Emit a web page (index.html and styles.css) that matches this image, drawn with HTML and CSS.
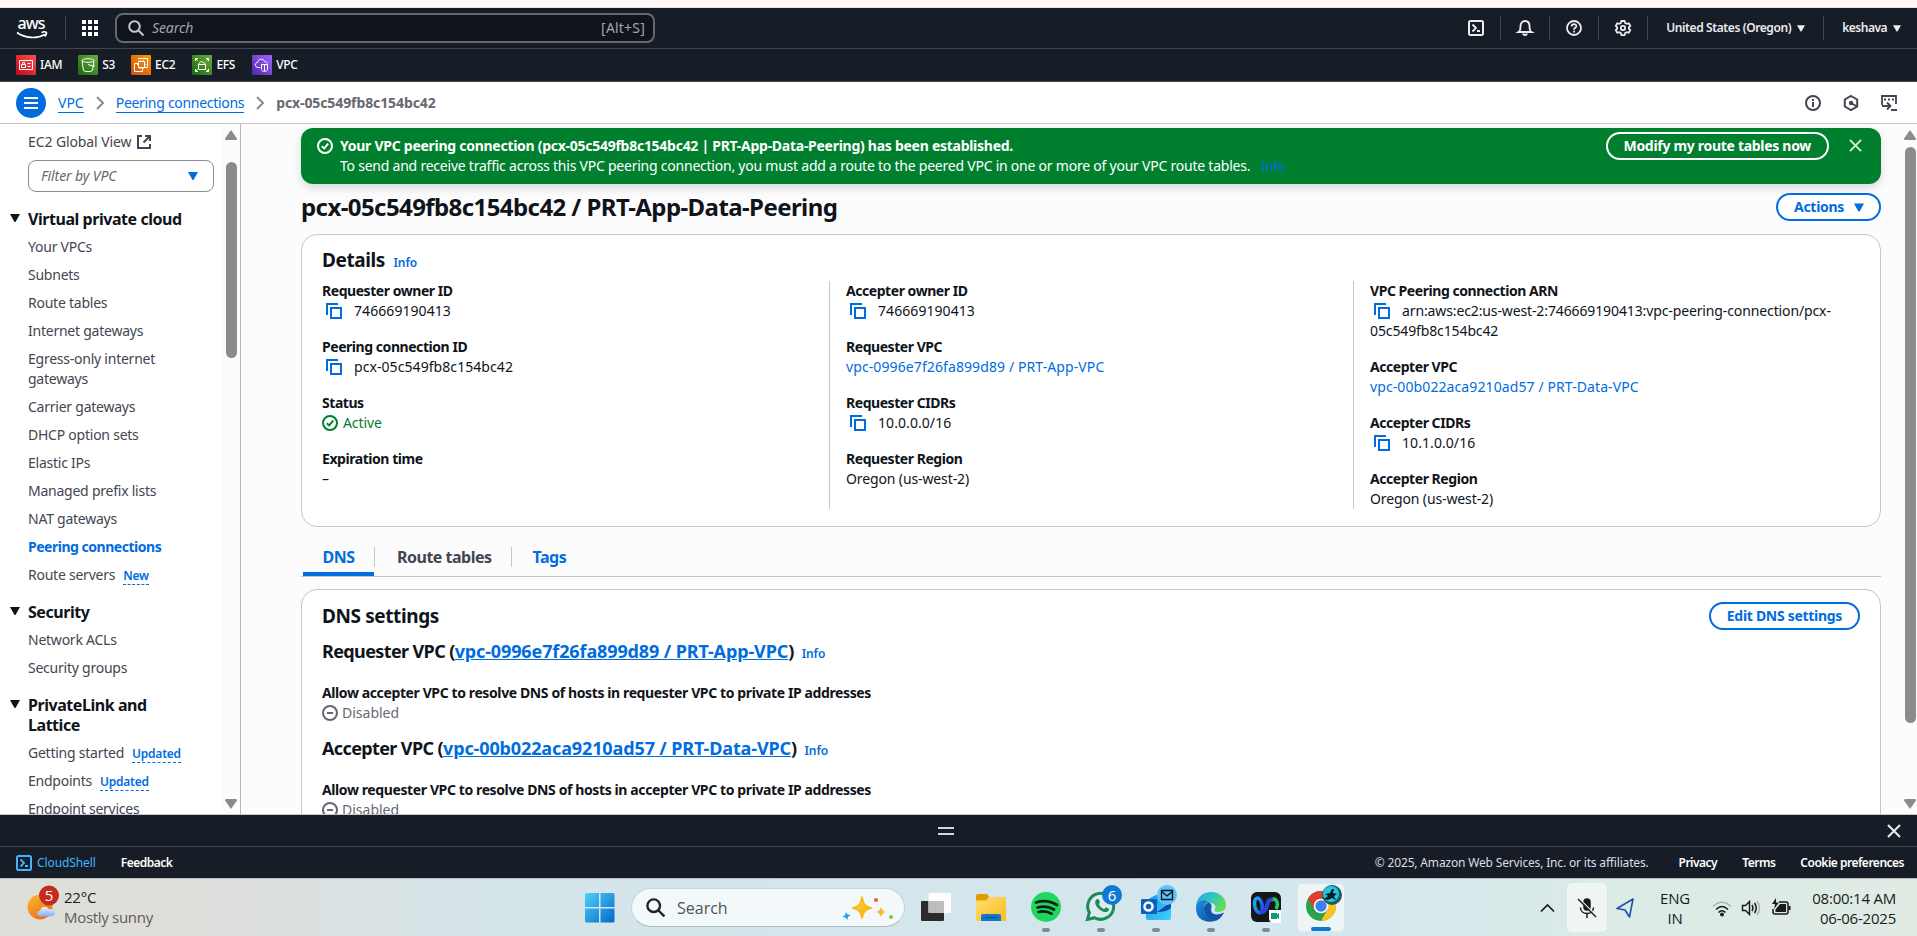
FILE: index.html
```html
<!DOCTYPE html>
<html lang="en">
<head>
<meta charset="utf-8">
<title>Peering connection details | VPC Console</title>
<link rel="stylesheet" href="styles.css">
</head>
<body>
<svg class="defs" width="0" height="0" aria-hidden="true">
  <defs>
    <linearGradient id="red" x1="0" y1="1" x2="1" y2="0"><stop offset="0" stop-color="#bd0816"/><stop offset="1" stop-color="#ff5252"/></linearGradient>
    <linearGradient id="green" x1="0" y1="1" x2="1" y2="0"><stop offset="0" stop-color="#1b660f"/><stop offset="1" stop-color="#6cae3e"/></linearGradient>
    <linearGradient id="orange" x1="0" y1="1" x2="1" y2="0"><stop offset="0" stop-color="#c8511b"/><stop offset="1" stop-color="#f90"/></linearGradient>
    <linearGradient id="purple" x1="0" y1="1" x2="1" y2="0"><stop offset="0" stop-color="#4d27a8"/><stop offset="1" stop-color="#a166ff"/></linearGradient>
    <linearGradient id="win" x1="0" y1="0" x2="1" y2="1"><stop offset="0" stop-color="#4fd0fb"/><stop offset="1" stop-color="#0468c6"/></linearGradient>
    <linearGradient id="gold" x1="0" y1="0" x2="1" y2="1"><stop offset="0" stop-color="#ffd95e"/><stop offset="1" stop-color="#f6a800"/></linearGradient>
    <linearGradient id="sun" x1="0" y1="0" x2=".6" y2="1"><stop offset="0" stop-color="#f9bd32"/><stop offset="1" stop-color="#ee6f14"/></linearGradient>
    <linearGradient id="cloud" x1="0" y1="0" x2="0" y2="1"><stop offset="0" stop-color="#e8f0fd"/><stop offset="1" stop-color="#86aef0"/></linearGradient>
    <linearGradient id="folder" x1="0" y1="0" x2="1" y2="1"><stop offset="0" stop-color="#ffdf72"/><stop offset="1" stop-color="#fbbb1c"/></linearGradient>
    <linearGradient id="edge-top" x1="0" y1="0" x2="1" y2=".4"><stop offset="0" stop-color="#2aa6dc"/><stop offset=".55" stop-color="#2fc3c9"/><stop offset="1" stop-color="#62dd57"/></linearGradient>
    <linearGradient id="edge-low" x1="0" y1="0" x2="1" y2="1"><stop offset="0" stop-color="#1b8fe0"/><stop offset="1" stop-color="#0c4b9b"/></linearGradient>
    <linearGradient id="webex" x1="0" y1="0" x2="1" y2="1"><stop offset="0" stop-color="#16b8f3"/><stop offset="1" stop-color="#2343f0"/></linearGradient>
    <linearGradient id="outlook" x1="0" y1="0" x2="1" y2="1"><stop offset="0" stop-color="#1a8fe3"/><stop offset="1" stop-color="#3fd5fb"/></linearGradient>
    <symbol id="copy" viewBox="0 0 16 16"><path d="M1 12V1h11" fill="none" stroke="currentColor" stroke-width="2"/><path d="M5 5h10v10H5z" fill="none" stroke="currentColor" stroke-width="2"/></symbol>
    <symbol id="ok" viewBox="0 0 16 16"><circle cx="8" cy="8" r="7" fill="none" stroke="currentColor" stroke-width="2"/><path d="M4.800 8.200l2.400 2.200 4-4.800" fill="none" stroke="currentColor" stroke-width="2"/></symbol>
    <symbol id="minus" viewBox="0 0 16 16"><circle cx="8" cy="8" r="7" fill="none" stroke="currentColor" stroke-width="2"/><path d="M5 8h6" stroke="currentColor" stroke-width="2"/></symbol>
    <symbol id="caret" viewBox="0 0 10 8"><path d="M0 0h10L5.800 7.400Q5 8.400 4.200 7.400z" fill="currentColor"/></symbol>
    <symbol id="close" viewBox="0 0 14 14"><path d="M1 1l12 12M13 1L1 13" fill="none" stroke="currentColor" stroke-width="2"/></symbol>
    <symbol id="shell" viewBox="0 0 16 16"><rect x="1" y="1" width="14" height="14" rx="1.500" fill="none" stroke="currentColor" stroke-width="2"/><path d="M4.500 4.500L8 8l-3.500 3.500M9 11h3" fill="none" stroke="currentColor" stroke-width="1.800"/></symbol>
    <symbol id="chev" viewBox="0 0 8 14"><path d="M1 1l6 6-6 6" fill="none" stroke="currentColor" stroke-width="2"/></symbol>
    <symbol id="glass" viewBox="0 0 16 16"><circle cx="6.500" cy="6.500" r="5.300" fill="none" stroke="currentColor" stroke-width="2"/><path d="M10.500 10.500l5 5" stroke="currentColor" stroke-width="2"/></symbol>
  </defs>
</svg>
<div class="strip"></div>
<header class="top">
  <svg class="aws" width="32" height="21" viewBox="0 0 32 21"><text x="1.500" y="11" class="aws-t" textLength="28">aws</text><path d="M1 14.500c8 6 20 6.500 28 2M25.500 14.500c2-.8 4-.8 4.700-.2.500.7-.2 2.700-1.500 4.200" fill="none" stroke="#fff" stroke-width="1.700"/></svg>
  <i class="div d-a"></i>
  <svg class="grid" width="16" height="16" fill="#fff"><path d="M0 0h4v4H0zM6 0h4v4H6zM12 0h4v4h-4zM0 6h4v4H0zM6 6h4v4H6zM12 6h4v4h-4zM0 12h4v4H0zM6 12h4v4H6zM12 12h4v4h-4z"/></svg>
  <div class="search"><svg width="16" height="16"><use href="#glass"/></svg><em>Search</em><span>[Alt+S]</span></div>
  <nav class="tools">
    <svg width="16" height="16"><use href="#shell"/></svg><i class="div"></i>
    <svg width="16" height="16" viewBox="0 0 16 16" fill="none" stroke="currentColor" stroke-width="1.800"><path d="M1.500 12c1.700-1 2-2.800 2-5.500C3.500 3 5.500 1 8 1s4.500 2 4.500 5.500c0 2.700.3 4.500 2 5.500zM6 13.500c.5 2 3.500 2 4 0"/></svg><i class="div"></i>
    <svg width="16" height="16" viewBox="0 0 16 16" fill="none" stroke="currentColor" stroke-width="1.800"><circle cx="8" cy="8" r="7"/><path d="M5.700 6.500C5.700 3.200 10.400 3.400 10.300 6.200 10.200 7.800 8 7.800 8 9.700M8 10.800v1.700"/></svg><i class="div"></i>
    <svg width="16" height="16" viewBox="0 0 16 16" fill="none" stroke="currentColor" stroke-width="1.800"><path d="M6.400 1h3.200l.5 2 1.700.9 2-.6 1.500 2.600L13.900 7.300v1.500l1.400 1.400-1.500 2.600-2-.6-1.700.9-.5 2H6.400l-.5-2-1.700-.9-2 .6L.8 10.200l1.300-1.400V7.300L.8 5.900l1.400-2.600 2 .6 1.700-.9z"/><circle cx="8" cy="8" r="2.200"/></svg><i class="div"></i>
    <b class="region">United States (Oregon)</b><svg width="8" height="7"><use href="#caret"/></svg><i class="div d-k"></i>
    <b class="user">keshava</b><svg width="8" height="7"><use href="#caret"/></svg>
  </nav>
</header>
<nav class="favs">
  <a><svg width="20" height="20" fill="none" stroke="#fff"><rect width="20" height="20" rx="1" fill="url(#red)" stroke="none"/><path d="M3.500 5.500h13v9h-13zM5.500 9.500h4v3h-4zM6.500 9.500V7.500h2v2M11.500 8.500h3M11.500 11.500h3"/></svg><span>IAM</span></a>
  <a><svg width="20" height="20" fill="none" stroke="#fff"><rect width="20" height="20" rx="1" fill="url(#green)" stroke="none"/><ellipse cx="10" cy="5.500" rx="6" ry="1.800"/><path d="M4 5.500l1.500 10c1.500 1.500 7.500 1.500 9 0l1.500-10M10 9.500l6 2c.6-.5 0-1.300-1-2"/></svg><span>S3</span></a>
  <a><svg width="20" height="20" fill="none" stroke="#fff"><rect width="20" height="20" rx="1" fill="url(#orange)" stroke="none"/><path d="M7.500 6.500h6v6h-6zM7 3.500h9.500v9h-3M7.500 8.500h-4v8h8v-4M9 5v1.500M12 5v1.500M9 12.500V14M12 12.500V14M6 9.500h1.500M13.500 9.500H15"/></svg><span>EC2</span></a>
  <a><svg width="20" height="20" fill="none" stroke="#fff"><rect width="20" height="20" rx="1" fill="url(#green)" stroke="none"/><path d="M6.500 14.500v-5h7v5zM7 9.500c-.3-2.800 3.500-3.800 4.500-1.500 1.200-.3 1.800.5 1.700 1.500M3.500 6V3.500H6M3.500 3.500l2 2M14 3.500h2.500V6M16.500 3.500l-2 2M3.500 14v2.500H6M3.500 16.500l2-2M14 16.500h2.500V14M16.500 16.500l-2-2"/></svg><span>EFS</span></a>
  <a><svg width="20" height="20" fill="none" stroke="#fff"><rect width="20" height="20" rx="1" fill="url(#purple)" stroke="none"/><path d="M8 12.500H6c-3.500-.5-3.500-4.500-.5-5 .5-4 6-4.500 7-1 1.500-.3 2.500.5 2.700 2M9.500 9.500h6v5c-.5 2.500-5.500 2.500-6 0zM12.500 10v6"/></svg><span>VPC</span></a>
</nav>
<div class="crumbs">
  <span class="burger"><svg width="14" height="12" stroke="#fff" stroke-width="2"><path d="M0 1h14M0 6h14M0 11h14"/></svg></span>
  <a class="c1">VPC</a><svg width="8" height="14"><use href="#chev"/></svg><a class="c2">Peering connections</a><svg width="8" height="14"><use href="#chev"/></svg><b>pcx-05c549fb8c154bc42</b>
  <div class="crumb-tools">
    <svg width="16" height="16" fill="none" stroke="currentColor" stroke-width="2"><circle cx="8" cy="8" r="7"/><path d="M8 7v5M8 4v2"/></svg>
    <svg width="16" height="16" fill="none" stroke="currentColor" stroke-width="2"><path d="M8 1l6.200 3.500v7L8 15l-6.200-3.500v-7z"/><circle cx="8" cy="8" r="1.200" /><path d="M8 8l6 3.500"/></svg>
    <svg width="16" height="16" fill="none" stroke="currentColor" stroke-width="2"><path d="M1 10V1h14v8M3 4.500h2M7 4.500h2M11 4.500h2M1 11h8M6 7.500L9.500 11 6 14.500M10 15h6" stroke-width="1.800"/></svg>
  </div>
</div>
<div class="work">
  <aside class="side">
    <div class="side-body">
      <div class="item view">EC2 Global View <svg width="14" height="14" fill="none" stroke="currentColor" stroke-width="2"><path d="M5 1H1v12h12V9M8 1h5v5M13 1L6.500 7.500"/></svg></div>
      <div class="select"><em>Filter by VPC</em><svg width="10" height="8"><use href="#caret"/></svg></div>
      <h3><svg width="10" height="8"><use href="#caret"/></svg>Virtual private cloud</h3>
      <div class="item">Your VPCs</div><div class="item">Subnets</div><div class="item">Route tables</div><div class="item">Internet gateways</div>
      <div class="item">Egress-only internet<br>gateways</div><div class="item">Carrier gateways</div><div class="item">DHCP option sets</div><div class="item">Elastic IPs</div>
      <div class="item">Managed prefix lists</div><div class="item">NAT gateways</div><div class="item on">Peering connections</div><div class="item">Route servers<span class="tag">New</span></div>
      <h3><svg width="10" height="8"><use href="#caret"/></svg>Security</h3>
      <div class="item">Network ACLs</div><div class="item">Security groups</div>
      <h3><svg width="10" height="8"><use href="#caret"/></svg>PrivateLink and<br>Lattice</h3>
      <div class="item">Getting started<span class="tag">Updated</span></div><div class="item">Endpoints<span class="tag">Updated</span></div><div class="item">Endpoint services</div>
    </div>
    <div class="bar"><svg width="12" height="10" fill="#8b8b8b"><path d="M6 0l6 8.500q0 1.500-1 1.500H1q-1 0-1-1.500z"/></svg><i class="thumb"></i><svg class="dn" width="12" height="10" fill="#8b8b8b"><path d="M6 10l6-8.500Q12 0 11 0H1Q0 0 0 1.500z"/></svg></div>
  </aside>
  <main class="main">
    <section class="flash">
      <svg width="16" height="16"><use href="#ok"/></svg>
      <div class="flash-t"><b>Your VPC peering connection (pcx-05c549fb8c154bc42 | PRT-App-Data-Peering) has been established.</b><p>To send and receive traffic across this VPC peering connection, you must add a route to the peered VPC in one or more of your VPC route tables. <a class="info">Info</a></p></div>
      <span class="btn btn-w">Modify my route tables now</span>
      <svg class="x" width="13" height="13" viewBox="0 0 14 14"><use href="#close"/></svg>
    </section>
    <div class="title"><h1>pcx-05c549fb8c154bc42 / PRT-App-Data-Peering</h1><span class="btn">Actions <svg width="10" height="9"><use href="#caret"/></svg></span></div>
    <section class="card details">
      <h2>Details <a class="info">Info</a></h2>
      <div class="cols">
        <dl><dt>Requester owner ID</dt><dd><svg class="cp" width="16" height="16"><use href="#copy"/></svg>746669190413</dd><dt>Peering connection ID</dt><dd><svg class="cp" width="16" height="16"><use href="#copy"/></svg>pcx-05c549fb8c154bc42</dd><dt>Status</dt><dd class="ok"><svg width="16" height="16"><use href="#ok"/></svg>Active</dd><dt>Expiration time</dt><dd>–</dd></dl>
        <dl><dt>Accepter owner ID</dt><dd><svg class="cp" width="16" height="16"><use href="#copy"/></svg>746669190413</dd><dt>Requester VPC</dt><dd><a>vpc-0996e7f26fa899d89 / PRT-App-VPC</a></dd><dt>Requester CIDRs</dt><dd><svg class="cp" width="16" height="16"><use href="#copy"/></svg>10.0.0.0/16</dd><dt>Requester Region</dt><dd class="place">Oregon (us-west-2)</dd></dl>
        <dl><dt>VPC Peering connection ARN</dt><dd class="arn"><svg class="cp" width="16" height="16"><use href="#copy"/></svg>arn:aws:ec2:us-west-2:746669190413:vpc-peering-connection/pcx-<br>05c549fb8c154bc42</dd><dt>Accepter VPC</dt><dd><a>vpc-00b022aca9210ad57 / PRT-Data-VPC</a></dd><dt>Accepter CIDRs</dt><dd><svg class="cp" width="16" height="16"><use href="#copy"/></svg>10.1.0.0/16</dd><dt>Accepter Region</dt><dd class="place">Oregon (us-west-2)</dd></dl>
      </div>
    </section>
    <nav class="tabs"><a class="cur">DNS</a><i></i><a class="grey">Route tables</a><i></i><a>Tags</a></nav>
    <section class="card dns">
      <div class="dns-h"><h2>DNS settings</h2><span class="btn">Edit DNS settings</span></div>
      <h4>Requester VPC (<a>vpc-0996e7f26fa899d89 / PRT-App-VPC</a>)<span class="info">Info</span></h4>
      <b>Allow accepter VPC to resolve DNS of hosts in requester VPC to private IP addresses</b>
      <p><svg width="16" height="16"><use href="#minus"/></svg>Disabled</p>
      <h4>Accepter VPC (<a>vpc-00b022aca9210ad57 / PRT-Data-VPC</a>)<span class="info">Info</span></h4>
      <b>Allow requester VPC to resolve DNS of hosts in accepter VPC to private IP addresses</b>
      <p><svg width="16" height="16"><use href="#minus"/></svg>Disabled</p>
    </section>
  </main>
  <div class="bar bar-r"><svg width="12" height="10" fill="#8b8b8b"><path d="M6 0l6 8.500q0 1.500-1 1.500H1q-1 0-1-1.500z"/></svg><i class="thumb"></i><svg class="dn" width="12" height="10" fill="#8b8b8b"><path d="M6 10l6-8.500Q12 0 11 0H1Q0 0 0 1.500z"/></svg></div>
</div>
<div class="panel"><i class="grip"></i><svg width="14" height="14"><use href="#close"/></svg></div>
<footer class="foot"><svg width="16" height="16"><use href="#shell"/></svg><span class="cs">CloudShell</span><b class="fb">Feedback</b><span class="copyr">© 2025, Amazon Web Services, Inc. or its affiliates.</span><b class="pr">Privacy</b><b class="te">Terms</b><b class="co">Cookie preferences</b></footer>
<div class="task">
  <div class="weather">
    <svg width="34" height="36"><circle cx="13" cy="22" r="12.500" fill="url(#sun)"/><path d="M14 31.500c-4.500 0-5-5.500-.8-6 .8-4.500 7-4.800 8.300-1.200 3-.8 6.800 1 6.300 4-.3 2.200-2 3.200-4 3.200z" fill="url(#cloud)"/><circle cx="22" cy="10.500" r="10" fill="#c42b1c"/><text x="22" y="16" class="badge-t" fill="#fff">5</text></svg>
    <div><p>22°C</p><p class="dim">Mostly sunny</p></div>
  </div>
  <div class="apps">
    <svg class="winlogo" width="30" height="30"><path d="M0 1.500Q0 0 1.500 0H14v14H0zM15.500 0H28q1.500 0 1.500 1.500V14h-14zM0 15.500h14v14H1.500Q0 29.500 0 28zM15.500 15.500h14V28q0 1.500-1.500 1.500H15.500z" fill="url(#win)"/></svg>
    <div class="pill"><svg width="19" height="19" viewBox="0 0 16 16"><use href="#glass"/></svg><span>Search</span>
      <svg width="52" height="26"><path d="M20 2c1.500 7.500 3 9.500 9.500 11C23 14.500 21.500 16.500 20 23c-1.500-6.500-3-8.500-9.500-10C17 11.500 18.500 9.500 20 2z" fill="url(#gold)" stroke="#f9b90f" stroke-width="1.500" stroke-linejoin="round"/><path d="M39 12q1 4 4.500 5-3.500 1-4.500 5-1-4-4.500-5 3.500-1 4.500-5z" fill="#f9ba24"/><path d="M4 17l1.500 2.500L8.500 20 6 22l-.5 3-2-2.500L.5 22 3 20z" fill="#1ba3ec"/><circle cx="34" cy="5" r="2" fill="#f0622a"/><circle cx="49" cy="22" r="2" fill="#85c440"/></svg>
    </div>
    <div class="app"><svg width="32" height="32"><rect x="1" y="9" width="23" height="20" rx="1" fill="#2b2b2b"/><rect x="8.500" y="1" width="22.500" height="20" rx="1" fill="#fdfdfd"/><path d="M8.500 9H24v12H8.500z" fill="#bdbdbd"/></svg></div>
    <div class="app"><svg width="32" height="32"><path d="M1 4q0-2 2-2h9l3 4v4H1z" fill="#dd9d05"/><path d="M1 8.500h10L14 5h17v24H1z" fill="url(#folder)"/><path d="M6 29v-5q0-2 2-2h16q2 0 2 2v5z" fill="#0f78d0"/><path d="M10 25.500h12" stroke="#074c91" stroke-width="1.500"/></svg></div>
    <div class="app run"><svg width="32" height="32"><circle cx="16" cy="15" r="15" fill="#1ed760"/><path d="M6 10.500q11-3.500 21 2.500M7.500 15.500q9-2.500 16.500 2M8.500 20q7-2 13 1.700" fill="none" stroke="#0c2014" stroke-width="2.700" stroke-linecap="round"/></svg></div>
    <div class="app run"><svg width="40" height="38" viewBox="-1 -6 40 38"><path d="M1.500 28.500l1.800-7A13 13 0 1 1 8.500 26.700z" fill="#dcebee" stroke="#1c8a56" stroke-width="3"/><path d="M10.500 8.500c2-1.500 2.500.5 3.300 2.300.5 1.200-1.300 1.900-.8 2.800 1 2 2.800 3.600 4.700 4.300 1 .4 1.700-1.900 2.800-1.400 2.500 1 3.300 1.500 2 3.200-1.500 2.300-5.500 1.700-9-1.200-3.500-3-6-7.500-3-10z" fill="#1c8a56"/><circle cx="26" cy="4" r="10" fill="#0f79d3"/><text x="26" y="9.500" class="badge-t" fill="#fff">6</text></svg></div>
    <div class="app run"><svg width="40" height="38" viewBox="-1 -6 40 38"><path d="M9 7l12-6 9 12v14q0 2-2 2H7q-2 0-2-2V13z" fill="url(#outlook)"/><path d="M16 21l14-10v6q-4 4-14 4z" fill="#0a4bb0"/><rect x="0" y="8" width="16" height="15" rx="1" fill="#0a62bd"/><circle cx="7.500" cy="15.500" r="4" fill="none" stroke="#fff" stroke-width="2.500"/><circle cx="26" cy="4" r="10" fill="#5bc4fb"/><path d="M20.500-.5h11v9h-11zM20.500.5L26 5l5.500-4.500" fill="none" stroke="#111" stroke-width="1.300"/></svg></div>
    <div class="app run"><svg width="32" height="32"><path d="M1 14C2 5 8 0 16 0c9 0 15 6 15 13 0 5-4 7-8 7-3 0-4-1-3-3 2-4-3-7-8-6C7 11 3 12 1 14z" fill="url(#edge-top)"/><path d="M1 15c1-6 8-8 12-5-3 1-4 4-4 7 0 7 6 12 13 11-8 4-22 1-21-13z" fill="url(#edge-low)"/><path d="M9 17c0-3 2-6 5-6.500 3 1.500 3 4 2 7 1 5 8 5 13 3-2 4-5 7.500-8 8C14 29 9 23 9 17z" fill="#1056a8"/><path d="M16 17.500c1 4 8 4.500 12 3-2 1.500-6 2.500-9 1.500-2-.8-3-2.500-3-4.500z" fill="#d9eaf0"/></svg></div>
    <div class="app run"><svg width="32" height="32"><rect x="1" y="0" width="30" height="30" rx="6" fill="#171717"/><path d="M20.500 8.500c5-4.500 9 2.500 5.500 8.500" fill="none" stroke="#24c864" stroke-width="3.500"/><ellipse cx="8.500" cy="13.500" rx="3.700" ry="7.500" fill="none" stroke="url(#webex)" stroke-width="3.500" transform="rotate(-12 8.500 13.500)"/><path d="M10.500 19.500c4 2.500 6-3.500 7-7.500s2-5 5-4" fill="none" stroke="#2343e6" stroke-width="4"/><path d="M19 18h12v13H24q-5 0-5-5z" fill="#fff"/><path d="M21 21h6v1.500l2-1.500v6l-2-1.500V27h-6z" fill="#129a72"/></svg></div>
    <div class="app run active"><svg width="40" height="38" viewBox="-1 -6 40 38"><circle cx="15" cy="15" r="15" fill="#2ba24c"/><path d="M15 15L2 7.500A15 15 0 0 1 28 7.500H15z" fill="#e33b2e"/><path d="M2 7.500L9 19l6-4V7.500z" fill="#e33b2e"/><path d="M28 7.500A15 15 0 0 1 15 30l6.500-11.500L20 8z" fill="#fcc31e"/><circle cx="15" cy="15" r="7.300" fill="#fff"/><circle cx="15" cy="15" r="5.700" fill="#3c7ff0"/><circle cx="26" cy="4" r="10" fill="#1b5a6b"/><circle cx="25" cy="3" r="8" fill="#25c6dc"/><path d="M18 8l4-3-3-2 5-1 2-4h2l-1 4 4 1-3 2 2 4-4-2-4 2z" fill="#0b1d25"/></svg></div>
  </div>
  <div class="tray">
    <svg class="up" width="15" height="10" fill="none" stroke="#1b1b1b" stroke-width="1.700"><path d="M1 8.500l6.500-6.500L14 8.500"/></svg>
    <div class="mic"><svg width="22" height="22" fill="none" stroke="#1b1b1b" stroke-width="1.500"><rect x="8" y="2" width="6" height="11" rx="3" fill="#1b1b1b"/><path d="M4.500 10.500c0 8 13 8 13 0M11 17v4"/><path d="M3 1.500l18 18" stroke="#eef5f4"/><path d="M2 2l18 18"/></svg></div>
    <svg class="loc" width="20" height="22" fill="none" stroke="#1b4fa8" stroke-width="1.600" stroke-linejoin="round"><path d="M18 2L2 11.500l8 1.500 4.500 7z"/></svg>
    <div class="lang">ENG<br>IN</div>
    <svg class="wifi" width="20" height="18" fill="none" stroke="#1b1b1b" stroke-width="1.500"><path d="M1 7.500q9-8.500 18 0" stroke="#a9b5b3"/><path d="M4 10.500q6-6 12 0M6.500 13.500q3.500-3.500 7 0"/><circle cx="10" cy="15.500" r="1.200" fill="#1b1b1b"/></svg>
    <svg class="spk" width="21" height="18" fill="none" stroke="#1b1b1b" stroke-width="1.500"><path d="M1.500 6.500h3l4-4v13l-4-4h-3zM11 6q2 3 0 6M13.500 4q3.500 5 0 10"/><path d="M16 2q5 7 0 14" stroke="#a9b5b3"/></svg>
    <svg class="bat" width="21" height="20" fill="none" stroke="#1b1b1b" stroke-width="1.500"><path d="M8 4h7q2 0 2 2v8q0 2-2 2H4q-2 0-2-2v-3"/><path d="M4.500 11.500L9 6h6v8H4.500z" fill="#1b1b1b" stroke="none"/><path d="M18.500 8v4" stroke-width="2"/><path d="M5 0L1 6h3L3 11l5-6.500H5z" fill="#1b1b1b" stroke="none"/></svg>
    <div class="time">08:00:14 AM<br>06-06-2025</div>
  </div>
</div>
</body>
</html>
```
FILE: styles.css
```css
* { box-sizing: border-box; }
body { margin: 0; width: 1917px; height: 936px; overflow: hidden; display: flex; flex-direction: column; font: 14px/20px "Noto Sans", "Open Sans", sans-serif; color: #0f141a; background: #fff; }
h1, h2, h3, h4, p, dl, dd { margin: 0; }
svg { flex: none; overflow: visible; }
a { color: #006ce0; }
b { font-weight: 700; letter-spacing: -.27px; }
.defs { position: absolute; }
.strip { height: 8px; background: #fff7f5; border-bottom: 1px solid #f9dbe0; flex: none; }
.top { height: 41px; background: #161d26; border-bottom: 1px solid #424650; display: flex; align-items: center; padding-left: 16px; flex: none; color: #ebebf0; }
.aws-t { font: 500 16px "Noto Sans", sans-serif; fill: #fff; }
.div { width: 1px; height: 24px; background: #424650; }
.d-a { margin: 0 16px 0 17px; }
.search { margin-left: 17px; width: 540px; height: 30px; border: 2px solid #656871; border-radius: 8px; background: #0f141a; display: flex; align-items: center; padding: 0 8px 0 11px; color: #a4a4ad; }
.search svg { color: #c6c6cd; }
.search em { margin-left: 8px; flex: 1; letter-spacing: -.1px; }
.search span { letter-spacing: .2px; }
.tools { margin-left: auto; display: flex; align-items: center; padding-right: 16px; }
.tools > svg + .div { margin: 0 16px; }
.tools b { font-size: 12px; font-weight: 600; letter-spacing: -.4px; }
.region { margin-left: 2px; margin-right: 6px; }
.tools .user { margin-right: 6px; letter-spacing: -.5px; }
.tools > svg + .d-k { margin: 0 18px 0 18px; }
.favs { height: 33px; background: #161d26; border-bottom: 1px solid #424650; display: flex; align-items: center; padding-left: 16px; flex: none; color: #fff; font-size: 12px; font-weight: 500; letter-spacing: -.3px; }
.favs a { display: flex; align-items: center; gap: 4px; color: #fff; margin-right: 16px; }
.favs a:nth-child(3) { margin-right: 17px; }
.favs a:nth-child(4) { margin-right: 17px; }
.crumbs { height: 42px; border-bottom: 1px solid #c6c6cd; display: flex; align-items: center; padding: 0 20px 0 16px; flex: none; color: #8c8c94; }
.burger { width: 30px; height: 30px; border-radius: 50%; background: #006ce0; display: flex; align-items: center; justify-content: center; margin-right: 12px; }
.crumbs a { border-bottom: 1px solid #006ce0; line-height: 19px; margin-top: 1px; }
.crumbs .c2 { letter-spacing: -.3px; }
.crumbs > svg { margin: 0 12px; }
.crumbs b { color: #656871; letter-spacing: -.1px; }
.crumb-tools { margin-left: auto; display: flex; gap: 22px; color: #424650; }
.work { height: 691px; display: flex; flex: none; border-bottom: 1px solid #c6c6cd; overflow: hidden; }
.side { width: 241px; border-right: 1px solid #b4b4bb; display: flex; flex: none; }
.side-body { width: 222px; padding: 8px 0 0 28px; }
.item { margin-bottom: 8px; color: #424650; white-space: nowrap; letter-spacing: -.24px; }
.view { display: flex; align-items: center; gap: 6px; letter-spacing: -.1px; }
.select { width: 186px; height: 32px; border: 1px solid #8c8c94; border-radius: 8px; display: flex; align-items: center; justify-content: space-between; padding: 0 15px 0 12px; color: #656871; letter-spacing: -.1px; }
.select svg { color: #006ce0; }
.side h3 { font-size: 16px; font-weight: 700; line-height: 20px; letter-spacing: -.45px; margin: 17px 0 8px; position: relative; white-space: nowrap; }
.side h3 svg { position: absolute; left: -18px; top: 5px; }
.on { color: #006ce0; font-weight: 700; letter-spacing: -.48px; }
.tag { color: #006ce0; font-size: 12px; font-weight: 600; line-height: 16px; border-bottom: 1px dashed #006ce0; margin-left: 8px; }
.bar { width: 18px; background: #fcfcfd; display: flex; flex-direction: column; align-items: center; padding: 6px 0 5px; }
.bar .thumb { width: 11px; height: 196px; margin-top: 22px; border-radius: 6px; background: #8b8b8b; }
.bar .dn { margin-top: auto; }
.main { flex: 1; background: #fcfcfd; padding: 4px 18px 0 60px; min-width: 0; }
.bar-r .thumb { height: 576px; margin-top: 7px; }
.bar-r { align-items: flex-end; padding-right: 1px; }
.flash { height: 56px; border-radius: 12px; background: #00802f; color: #fff; display: flex; padding: 8px 19px 8px 16px; box-shadow: 0 4px 10px rgba(0, 7, 22, .14); }
.flash > svg { margin-top: 2px; }
.flash-t { margin-left: 7px; flex: 1; white-space: nowrap; letter-spacing: -.23px; }
.flash .x { margin: 3px 0 0 20px; color: #d5ecd9; }
.info { font-size: 12px; font-weight: 600; line-height: 1; color: #006ce0; margin-left: 8px; letter-spacing: -.1px; }
.flash .info { font-weight: 500; }
.btn { height: 28px; border: 2px solid #006ce0; border-radius: 20px; color: #006ce0; font-weight: 700; letter-spacing: -.3px; line-height: 24px; padding: 0 16px; display: inline-flex; align-items: center; gap: 10px; white-space: nowrap; background: #fff; }
.btn-w { border-color: #fff; color: #fff; background: none; margin-top: -4px; }
.title { display: flex; justify-content: space-between; align-items: center; height: 28px; margin-top: 9px; }
.title .btn { padding: 0 15px 0 16px; }
h1 { font-size: 24px; font-weight: 700; line-height: 28px; letter-spacing: -.58px; }
.card { border: 1px solid #c6c6cd; border-radius: 16px; background: #fff; padding: 0 20px; }
h2 { font-size: 19px; font-weight: 700; line-height: 22px; letter-spacing: -.4px; }
.details { margin-top: 13px; height: 293px; padding-top: 14px; }
.details h2 .info { margin-left: 4px; }
.cols { display: grid; grid-template-columns: 507px 524px 1fr; margin-top: 10px; height: 228px; }
.cols dl { white-space: nowrap; }
.cols dl + dl { border-left: 1px solid #c6c6cd; padding-left: 16px; }
dt { font-weight: 700; letter-spacing: -.45px; }
dd { margin-bottom: 16px; letter-spacing: .07px; }
dd:last-child { margin-bottom: 0; }
dd a { letter-spacing: .1px; }
.arn, .place { letter-spacing: -.12px; }
dd svg { vertical-align: -3px; margin-right: 5px; }
dd .cp { margin: 0 12px 0 4px; color: #006ce0; }
.ok { color: #00802f; letter-spacing: -.1px; }
.tabs { height: 50px; border-bottom: 1px solid #c6c6cd; display: flex; align-items: flex-end; font-size: 16px; font-weight: 700; letter-spacing: -.5px; }
.tabs a { height: 29px; padding: 0 22px 0 21px; }
.tabs i { width: 1px; height: 20px; background: #c6c6cd; margin-bottom: 9px; }
.tabs .cur { border-bottom: 4px solid #006ce0; margin-left: 2px; padding: 0; width: 71px; text-align: center; }
.tabs .grey { color: #424650; padding: 0 19px 0 22px; }
.dns { margin-top: 12px; height: 300px; padding-top: 12px; }
.dns-h { display: flex; justify-content: space-between; align-items: center; height: 28px; }
h4 { font-size: 18px; font-weight: 700; line-height: 22px; margin-top: 10px; letter-spacing: -.62px; }
h4 a { text-decoration: underline; letter-spacing: -.12px; }
.dns > b { display: block; margin-top: 21px; letter-spacing: -.39px; }
.dns p { color: #656871; display: flex; align-items: center; gap: 4px; }
.dns p + h4 { margin-top: 14px; }
.panel { height: 32px; background: #161d26; border-bottom: 1px solid #424650; display: flex; align-items: center; padding: 0 16px 0 938px; justify-content: space-between; color: #ebebf0; flex: none; }
.grip { width: 16px; height: 8px; border: solid #d5d5dc; border-width: 2px 0; }
.foot { height: 31px; background: #161d26; display: flex; align-items: center; padding: 0 13px 0 16px; color: #fff; font-size: 12px; flex: none; }
.foot svg, .cs { color: #42b4ff; }
.foot b { font-weight: 600; letter-spacing: -.5px; }
.cs { margin-left: 5px; letter-spacing: -.1px; }
.foot .fb { margin-left: 25px; }
.copyr { margin-left: auto; color: #dedee3; letter-spacing: -.17px; }
.pr { margin-left: 30px; }
.te, .co { margin-left: 25px; }
.task { height: 59px; border-top: 1px solid #b9bdbf; display: grid; grid-template-columns: 585px 1fr 377px; background: linear-gradient(90deg, #dedfd9 0, #dfddd8 8%, #d5e4e9 25%, #d3e7ee 70%, #dcebe6 85%, #e0ebe4 100%); font-family: "Open Sans", sans-serif; font-size: 15px; letter-spacing: -.22px; color: #1b1b1b; }
.weather { display: flex; padding: 6px 0 0 27px; gap: 3px; }
.weather p { line-height: 20px; margin-top: 2px; }
.weather p + p { margin-top: 0; }
.dim { color: #5c5c5c; letter-spacing: -.3px; }
.badge-t { font: 15px "Open Sans", sans-serif; text-anchor: middle; }
.apps { display: flex; align-items: center; }
.pill { margin-left: 17px; margin-right: 7px; width: 274px; height: 39px; border-radius: 20px; background: #f3f8fb; border: 1px solid #c3d4da; border-bottom-color: #a8bac0; display: flex; align-items: center; padding: 0 10px 0 14px; color: #222; }
.winlogo { margin-right: -1px; }
.pill span { flex: 1; margin-left: 12px; font-size: 16px; color: #4f5356; letter-spacing: 0; }
.app { width: 48px; height: 49px; margin-right: 7px; display: flex; align-items: center; justify-content: center; position: relative; border-radius: 5px; }
.app svg[width="40"] { margin: -7px 0 0 8px; }
.run::after { content: ""; position: absolute; left: 20px; bottom: 0; width: 8px; height: 4px; border-radius: 2px; background: #858b8e; }
.active { background: #edf5f6; border: 1px solid #dfe7e9; }
.active::after { width: 20px; left: 13px; background: #0f78d4; }
.tray { display: flex; align-items: center; }
.mic { width: 40px; height: 49px; border-radius: 5px; background: #eef5f4; display: flex; align-items: center; justify-content: center; margin: 0 8px 0 12px; }
.lang { width: 50px; margin-left: 15px; text-align: center; }
.wifi { margin-left: 12px; }
.spk { margin-left: 9px; }
.bat { margin-left: 9px; }
.time { margin-left: auto; padding-right: 21px; text-align: right; white-space: nowrap; }
```
